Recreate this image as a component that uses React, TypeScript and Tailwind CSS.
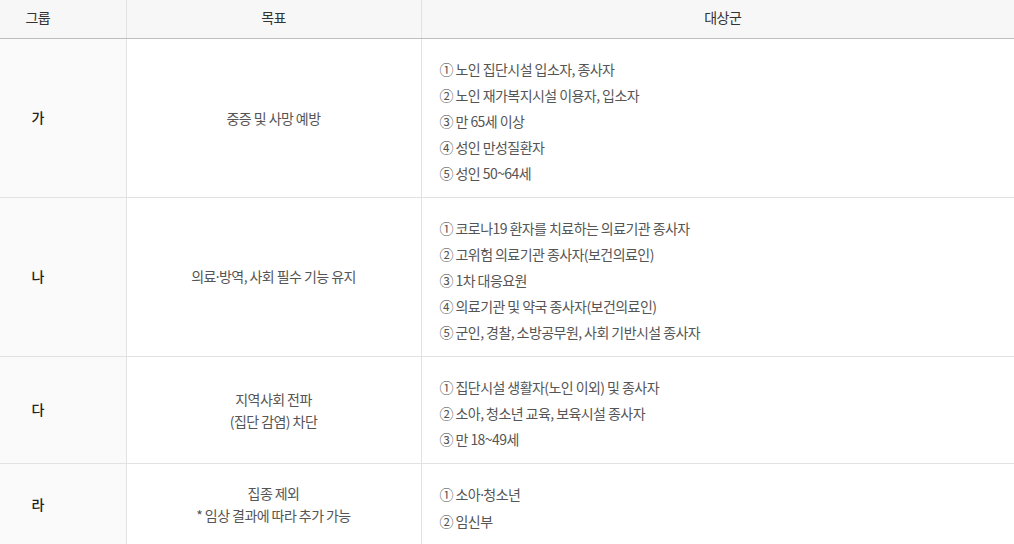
import React from "react";

const Dot = () => (
  <span style={{ fontFamily: '"Noto Sans", sans-serif' }}>·</span>
);

const rows: {
  g: string;
  goal: React.ReactNode[];
  items: React.ReactNode[];
}[] = [
  {
    g: "가",
    goal: ["중증 및 사망 예방"],
    items: [
      "① 노인 집단시설 입소자, 종사자",
      "② 노인 재가복지시설 이용자, 입소자",
      "③ 만 65세 이상",
      "④ 성인 만성질환자",
      "⑤ 성인 50~64세",
    ],
  },
  {
    g: "나",
    goal: [
      <>
        의료
        <Dot />
        방역, 사회 필수 기능 유지
      </>,
    ],
    items: [
      "① 코로나19 환자를 치료하는 의료기관 종사자",
      "② 고위험 의료기관 종사자(보건의료인)",
      "③ 1차 대응요원",
      "④ 의료기관 및 약국 종사자(보건의료인)",
      "⑤ 군인, 경찰, 소방공무원, 사회 기반시설 종사자",
    ],
  },
  {
    g: "다",
    goal: ["지역사회 전파", "(집단 감염) 차단"],
    items: [
      "① 집단시설 생활자(노인 이외) 및 종사자",
      "② 소아, 청소년 교육, 보육시설 종사자",
      "③ 만 18~49세",
    ],
  },
  {
    g: "라",
    goal: ["집종 제외", "* 임상 결과에 따라 추가 가능"],
    items: [
      <>
        ① 소아
        <Dot />
        청소년
      </>,
      "② 임신부",
    ],
  },
];

export default function App() {
  return (
    <div
      className="w-[1014px] h-[544px] overflow-hidden bg-white"
      style={{ fontFamily: '"Noto Sans CJK KR", "Noto Sans", sans-serif' }}
    >
      <table className="ml-[-50px] w-[1074px] border-collapse table-fixed text-[14px] tracking-[-0.04em]">
        <colgroup>
          <col className="w-[176px]" />
          <col className="w-[295px]" />
          <col />
        </colgroup>
        <thead>
          <tr className="bg-[#f7f7f7] h-[38px]">
            <th className="font-normal text-[#333] border-b border-b-[#bdbdbd] border-r border-r-[#e2e2e2] text-center pb-[3px]">
              그룹
            </th>
            <th className="font-normal text-[#333] border-b border-b-[#bdbdbd] border-r border-r-[#e2e2e2] text-center pb-[3px]">
              목표
            </th>
            <th className="font-normal text-[#333] border-b border-b-[#bdbdbd] text-center pb-[3px]">
              대상군
            </th>
          </tr>
        </thead>
        <tbody>
          {rows.map((r) => (
            <tr key={r.g} className="border-b border-[#e2e2e2]">
              <td className="bg-[#fafafa] border-r border-[#e2e2e2] text-center font-medium text-[#222]">
                {r.g}
              </td>
              <td className="border-r border-[#e2e2e2] text-center text-[#555] leading-[22px]">
                {r.goal.map((l, i) => (
                  <div key={i}>{l}</div>
                ))}
              </td>
              <td className="pl-[18px] pt-[17px] pb-[11px] text-[#555] leading-[26px]">
                {r.items.map((l, i) => (
                  <div key={i}>{l}</div>
                ))}
              </td>
            </tr>
          ))}
        </tbody>
      </table>
    </div>
  );
}
